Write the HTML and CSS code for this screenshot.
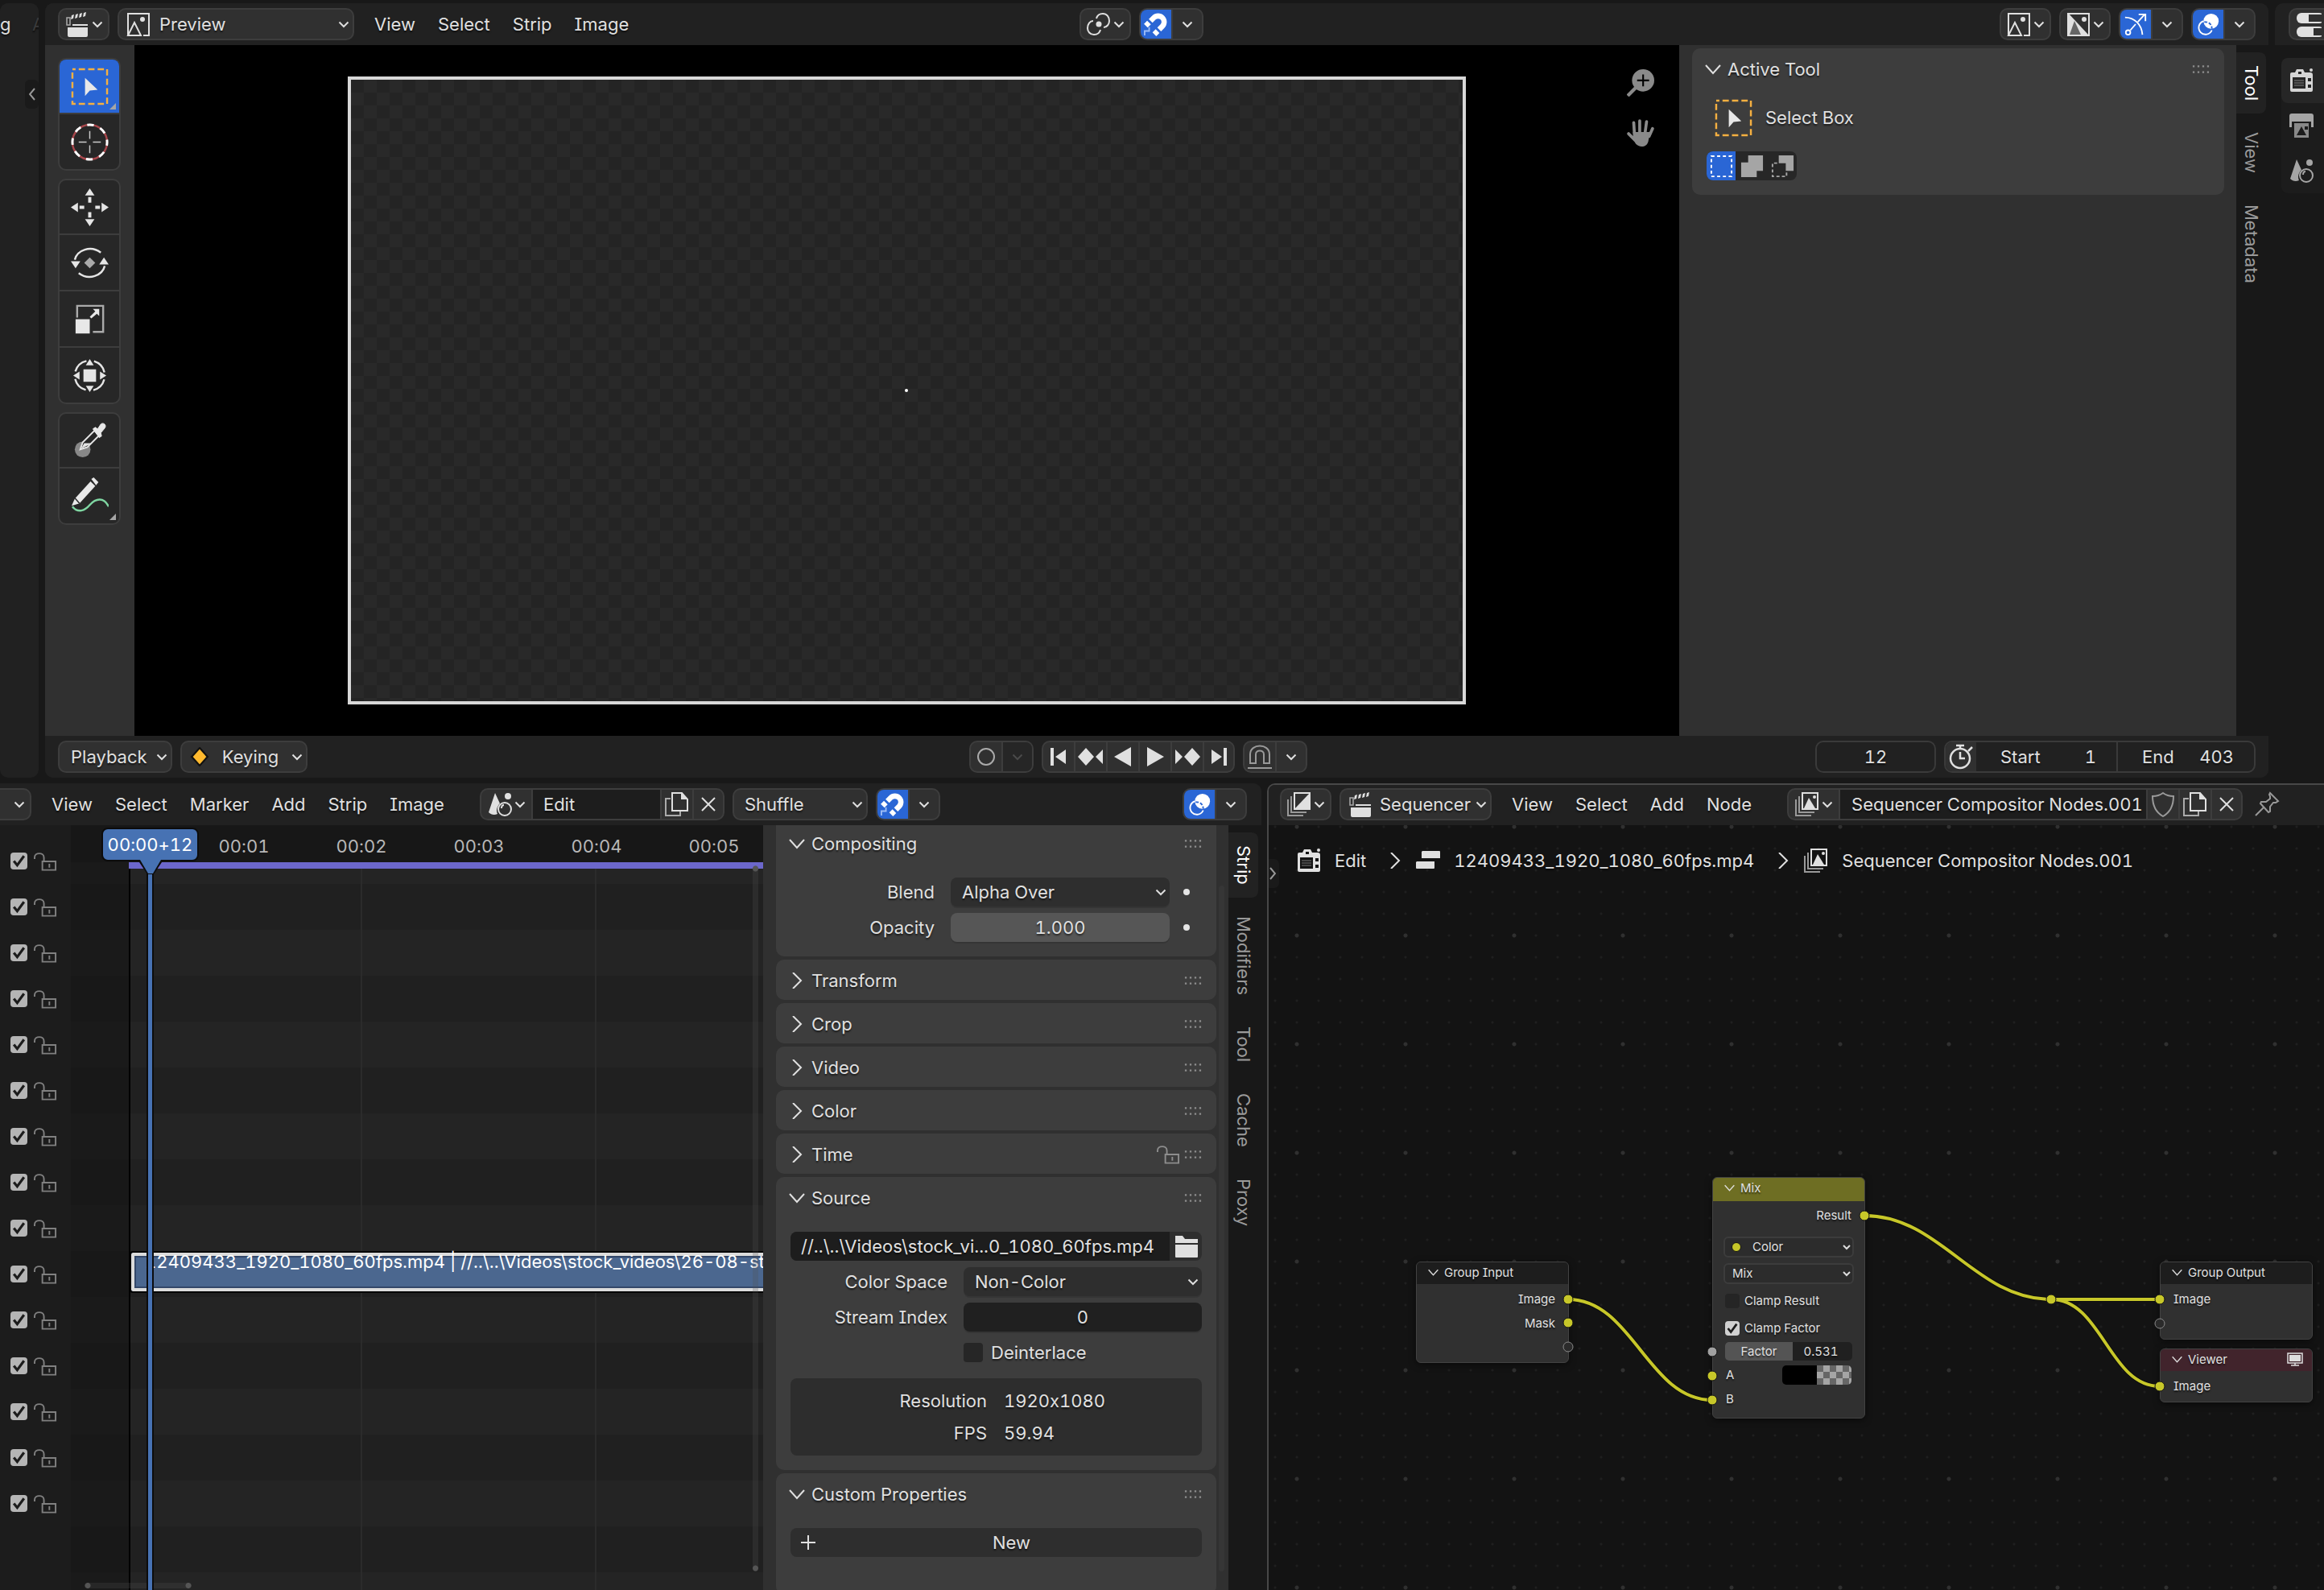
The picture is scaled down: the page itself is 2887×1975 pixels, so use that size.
FILE: index.html
```html
<!DOCTYPE html>
<html lang="en">
<head>
<meta charset="utf-8">
<title>Video Editing</title>
<link rel="stylesheet" href="styles.css">
</head>
<body>
<svg class="defs" aria-hidden="true">
  <symbol id="chev" viewBox="0 0 14 14"><path d="M1.500 4.500 7 10l5.500-5.500" fill="none" stroke="currentColor" stroke-width="2"/></symbol>
  <symbol id="down" viewBox="0 0 20 20"><path d="M1 5l9 10 9-10" fill="none" stroke="currentColor" stroke-width="2"/></symbol>
  <symbol id="right" viewBox="0 0 20 20"><path d="M5 0l10 10L5 20" fill="none" stroke="currentColor" stroke-width="2"/></symbol>
  <symbol id="grip" viewBox="0 0 24 12"><path d="M1 2h22M1 10h22" stroke="currentColor" stroke-width="2.500" stroke-dasharray="2.500 4" fill="none"/></symbol>
  <symbol id="clapper" viewBox="0 0 32 32"><rect x="3" y="8" width="4" height="9" fill="none" stroke="#aaa" stroke-width="1.500"/><path d="M9 5l3-1-1 5-3 1zM14 4l3-1-1 5-3 1zM19 3l3-1-1 5-3 1zM24 2l3-1-1 5-3 1zM10 16h19v2H10zM4 20h25v10a2 2 0 0 1-2 2H6a2 2 0 0 1-2-2z" fill="currentColor"/></symbol>
  <symbol id="image" viewBox="0 0 32 32"><path d="M3 30V3h26v27h-7M3 30l8-16 8 16zM3 30h3" fill="none" stroke="currentColor" stroke-width="2"/><circle cx="21" cy="10" r="3" fill="currentColor"/></symbol>
  <symbol id="imagehalf" viewBox="0 0 32 32"><path d="M3 2l26 28H3z" fill="currentColor"/><path d="M3 3h26v27H3z" fill="none" stroke="currentColor" stroke-width="2"/><path d="M11 12l8 17H5z" fill="#666"/><circle cx="23" cy="10" r="3" fill="currentColor"/></symbol>
  <symbol id="link" viewBox="0 0 32 32"><path d="M13 9c1-4 4-6 8-6 5 0 8 4 8 9 0 4-3 8-7 8M18 23c-1 4-4 6-8 6-5 0-8-4-8-8 0-5 3-9 7-9" fill="none" stroke="currentColor" stroke-width="2"/><circle cx="16" cy="16" r="3.500" fill="currentColor"/></symbol>
  <symbol id="magnet" viewBox="0 0 32 32"><g transform="rotate(45 16 16)" fill="none" stroke="currentColor" stroke-width="7"><path d="M8 18v-6a8 8 0 0 1 16 0v6M8 21v6M24 21v6"/></g><path d="M1 31v-6h6v-5" fill="none" stroke="#9dbcf5" stroke-width="2"/></symbol>
  <symbol id="gizmo" viewBox="0 0 32 32"><path d="M2 7c12 0 22 9 23 23M9 24l7-8M19 13l9-10M20 3h9v9" fill="none" stroke="currentColor" stroke-width="2"/><circle cx="6" cy="27" r="3" fill="none" stroke="currentColor" stroke-width="2"/></symbol>
  <symbol id="overlay" viewBox="0 0 32 32"><circle cx="20" cy="12" r="10" fill="currentColor"/><path d="M10 12a9 9 0 1 0 11 12" fill="none" stroke="currentColor" stroke-width="2"/><path d="M11 13c6 0 10 3 10 9" fill="none" stroke="#2a66d5" stroke-width="2" stroke-dasharray="4 2"/></symbol>
  <symbol id="selbox" viewBox="0 0 48 48"><rect x="2" y="2" width="44" height="44" fill="none" stroke="#f5b041" stroke-width="2.500" stroke-dasharray="8 4" stroke-dashoffset="4"/><path d="M18 13v23l6-7 10-1z" fill="#e8e8e8"/></symbol>
  <symbol id="cursor" viewBox="0 0 48 48"><circle cx="24" cy="24" r="22" fill="none" stroke="#a8474c" stroke-width="2.500"/><circle cx="24" cy="24" r="22" fill="none" stroke="#fff" stroke-width="3" stroke-dasharray="8.640 8.640" stroke-dashoffset="4"/><path d="M24 10v10M24 28v10M10 24h10M28 24h10" stroke="#ccc" stroke-width="1.500"/></symbol>
  <symbol id="move" viewBox="0 0 48 48"><path d="M24 0l6 9H18zM24 48l6-9H18zM0 24l9-6v12zM48 24l-9-6v12zM22 11h4v7h-4zM22 30h4v7h-4zM11 22h6v4h-6zM31 22h6v4h-6z" fill="#e5e5e5"/></symbol>
  <symbol id="rotate" viewBox="0 0 48 48"><path d="M5 20C8 8 25 1 38 11M43 28C40 40 23 47 10 37" fill="none" stroke="#e5e5e5" stroke-width="2.500"/><path d="M0 22h12l-6 9zM36 26h12l-6-9z" fill="#e5e5e5"/><path d="M24 17l7 7-7 7-7-7z" fill="#aaa"/></symbol>
  <symbol id="scale" viewBox="0 0 48 48"><path d="M8 22V7h33v33H28" fill="none" stroke="#aaa" stroke-width="2.500"/><path d="M6 24h18v18H6zM36 11v9l-3-3-7 6-2-2 7-7-3-3z" fill="#e8e8e8"/></symbol>
  <symbol id="xform" viewBox="0 0 48 48"><circle cx="24" cy="24" r="19" fill="none" stroke="#e5e5e5" stroke-width="2.500" stroke-dasharray="20 9.840" stroke-dashoffset="-5"/><path d="M16 16h16v16H16zM24 3l5 8H19zM24 45l5-8H19zM3 24l8-5v10zM45 24l-8-5v10z" fill="#e5e5e5"/></symbol>
  <symbol id="dropper" viewBox="0 0 48 48"><circle cx="15" cy="35" r="10" fill="#888"/><path d="M12 35l3-9 15-15 6 6-15 15z" fill="#262626" stroke="#e5e5e5" stroke-width="2"/><path d="M13 34l4-7h10z" fill="#e5e5e5"/><path d="M28 9l3-2 3 2 4-6c3-3 8 1 5 5l-5 6 1 4-3 2z" fill="#e8e8e8" stroke="#e8e8e8"/></symbol>
  <symbol id="pencil" viewBox="0 0 48 48"><path d="M2 37c7 9 16 5 22-2 8-9 18-10 24 2" fill="none" stroke="#7fd6a2" stroke-width="2.500"/><path d="M1 36l4-9L25 5l6 6L11 33z" fill="#e8e8e8"/><path d="M26 2l3-2 6 6-3 4z" fill="#e8e8e8"/><path d="M5 26l6 7" stroke="#262626" stroke-width="1.500"/></symbol>
  <symbol id="zoomin" viewBox="0 0 32 32"><circle cx="19" cy="13" r="13" fill="currentColor"/><path d="M11 21L1 31" stroke="currentColor" stroke-width="4"/><path d="M19 6v14M12 13h14" stroke="#000" stroke-width="2"/></symbol>
  <symbol id="hand" viewBox="0 0 32 32"><path d="M9 20L8 4M15 18V2M21 18l2-15M26 20l4-9M10 25L2 17" stroke="currentColor" stroke-width="3.500" stroke-linecap="round"/><path d="M7 15h20l-2 11c-2 8-13 8-16 0z" fill="currentColor"/></symbol>
  <symbol id="camera" viewBox="0 0 32 32"><path fill-rule="evenodd" d="M8 6l2-4h8l2 4h7a3 3 0 0 1 3 3v19a2 2 0 0 1-2 2H4a2 2 0 0 1-2-2V8a2 2 0 0 1 2-2zM12 5v3h4V5zM5 12v14h16V12zM24 13v4h4v-4zM24 21v4h4v-4z" fill="currentColor"/><path d="M7 16h12M7 19h12M7 22h12" stroke="currentColor" opacity=".5"/><circle cx="28" cy="3" r="2" fill="currentColor"/></symbol>
  <symbol id="printer" viewBox="0 0 32 32"><path d="M4 1h24a3 3 0 0 1 3 3v14h-3v-7H4v7H1V4a3 3 0 0 1 3-3z" fill="currentColor"/><path fill-rule="evenodd" d="M7 13h18v18H7zM10 28h12l-6-11zM20 17v4h4v-4z" fill="currentColor" opacity=".8"/></symbol>
  <symbol id="scene" viewBox="0 0 32 32"><path d="M10 2l6 13c-4 4-5 9-3 13-4 2-8 1-11-2z" fill="currentColor"/><circle cx="26" cy="6" r="4" fill="currentColor"/><circle cx="22" cy="22" r="8" fill="none" stroke="currentColor" stroke-width="2"/><path d="M18 21c0-2 1-4 3-4" fill="none" stroke="currentColor" stroke-width="2"/></symbol>
  <symbol id="props" viewBox="0 0 32 32"><rect x="1" y="2" width="34" height="13" rx="6" fill="currentColor"/><rect x="16" y="4" width="20" height="9" fill="#303030"/><rect x="1" y="19" width="34" height="13" rx="6" fill="currentColor"/><rect x="22" y="21" width="12" height="9" fill="#303030"/></symbol>
  <symbol id="copy" viewBox="0 0 32 32"><path d="M8 9H2v21h18v-5" fill="none" stroke="#aaa" stroke-width="2"/><path d="M10 2h12l7 8v14H10z" fill="none" stroke="currentColor" stroke-width="2"/><path d="M21 1l9 9h-9z" fill="currentColor"/></symbol>
  <symbol id="cross" viewBox="0 0 32 32"><path d="M8 8l16 16M24 8L8 24" stroke="currentColor" stroke-width="2"/></symbol>
  <symbol id="shield" viewBox="0 0 32 32"><path d="M16 2c4 3 8 4 13 4 0 12-4 20-13 25C7 26 3 18 3 6c5 0 9-1 13-4z" fill="none" stroke="#999" stroke-width="2"/></symbol>
  <symbol id="pin" viewBox="0 0 32 32"><path d="M20 2l10 10-3 2-3 0-4 5 0 6-2 1L8 15l1-2h6l5-4v-3l-1-2zM12 20L2 30" fill="none" stroke="#999" stroke-width="2"/></symbol>
  <symbol id="stack" viewBox="0 0 32 32"><path d="M6 6v20h19M2 10v20h19" fill="none" stroke="#999" stroke-width="2"/><path d="M10 2h19v20H10z" fill="none" stroke="currentColor" stroke-width="2"/><path d="M12 21l6-13 8 13z" fill="currentColor"/><circle cx="25" cy="7" r="2" fill="currentColor"/></symbol>
  <symbol id="compo" viewBox="0 0 32 32"><path d="M6 6v20h19M2 10v20h19" fill="none" stroke="#999" stroke-width="2"/><path d="M10 2h19v20H10z" fill="none" stroke="currentColor" stroke-width="2"/><path d="M29 2v20H10z" fill="currentColor"/></symbol>
  <symbol id="strip" viewBox="0 0 32 32"><path d="M9 4h21a1 1 0 0 1 1 1v8H8V5zM2 17h22v8a1 1 0 0 1-1 1H2a1 1 0 0 1-1-1v-7z" fill="currentColor"/></symbol>
  <symbol id="clock" viewBox="0 0 32 32"><circle cx="15" cy="18" r="12" fill="none" stroke="currentColor" stroke-width="2.500"/><path d="M10 2h10M15 2v5M25 9l5-5M15 10v8h6" fill="none" stroke="currentColor" stroke-width="2.500"/></symbol>
  <symbol id="snapoff" viewBox="0 0 32 32"><path d="M4 24V13C4-1 28-1 28 13v11h-7V13c0-6-10-6-10 0v11zM1 30h30" fill="none" stroke="#999" stroke-width="2"/></symbol>
  <symbol id="lock" viewBox="0 0 30 24"><path d="M1 9V7c0-7 12-7 12 0v5M11 12h17v11H11z" fill="none" stroke="currentColor" stroke-width="2"/><path d="M19 15h2v5h-2z" fill="currentColor"/></symbol>
  <symbol id="folder" viewBox="0 0 32 32"><path d="M2 3h9l3 4h16v5H2zM2 14h28v15a1 1 0 0 1-1 1H3a1 1 0 0 1-1-1z" fill="currentColor"/></symbol>
  <symbol id="plus" viewBox="0 0 20 20"><path d="M10 1v18M1 10h18" stroke="currentColor" stroke-width="2"/></symbol>
  <symbol id="monitor" viewBox="0 0 20 18"><path d="M1 1h18v12H1zM10 13v3M5 16h10" fill="none" stroke="#ddd" stroke-width="1.500"/><path d="M3 3h14v8H3z" fill="#ddd"/></symbol>
  <symbol id="m-first" viewBox="0 0 24 24"><path d="M2 1h4v22H2zM21 3v18L8 12z" fill="currentColor"/></symbol>
  <symbol id="m-prevkey" viewBox="0 0 32 24"><path d="M10 1l10 11-10 11L0 12zM31 3v18l-9-9z" fill="currentColor"/></symbol>
  <symbol id="m-back" viewBox="0 0 24 24"><path d="M22 0v24L1 12z" fill="currentColor"/></symbol>
</svg>

<main class="screen">
  <div class="upper">
    <section class="area sliver">
      <div class="head"><span>g</span><span class="faint">A</span></div>
      <button class="toggle" aria-label="Show sidebar"><svg width="8" height="16" viewBox="0 0 8 16"><path d="M7 1L1 8l6 7" fill="none" stroke="#999" stroke-width="2"/></svg></button>
    </section>

    <section class="area preview">
      <header class="head">
        <button class="btn type" aria-label="Editor type"><svg class="i32"><use href="#clapper"/></svg><svg class="i14"><use href="#chev"/></svg></button>
        <div class="btn mode"><svg class="i32"><use href="#image"/></svg><select aria-label="View type"><option>Preview</option></select></div>
        <nav class="menus"><a href="#">View</a><a href="#">Select</a><a href="#">Strip</a><a href="#">Image</a></nav>
        <span class="gap-a"></span>
        <button class="btn type" aria-label="Pivot point"><svg class="i32"><use href="#link"/></svg><svg class="i14"><use href="#chev"/></svg></button>
        <div class="group"><button class="cell on" aria-label="Snap"><svg class="i32"><use href="#magnet"/></svg></button><button class="cell" aria-label="Snap options"><svg class="i14"><use href="#chev"/></svg></button></div>
        <span class="gap-b"></span>
        <button class="btn type" aria-label="Display mode"><svg class="i32"><use href="#image"/></svg><svg class="i14"><use href="#chev"/></svg></button>
        <button class="btn type" aria-label="Channels"><svg class="i32"><use href="#imagehalf"/></svg><svg class="i14"><use href="#chev"/></svg></button>
        <div class="group"><button class="cell on" aria-label="Gizmos"><svg class="i32"><use href="#gizmo"/></svg></button><button class="cell" aria-label="Gizmo options"><svg class="i14"><use href="#chev"/></svg></button></div>
        <div class="group"><button class="cell on" aria-label="Overlays"><svg class="i32"><use href="#overlay"/></svg></button><button class="cell" aria-label="Overlay options"><svg class="i14"><use href="#chev"/></svg></button></div>
      </header>
      <div class="stage">
        <div class="tools">
          <div class="toolset">
            <button class="tool active more" aria-label="Select Box"><svg><use href="#selbox"/></svg></button>
            <button class="tool" aria-label="Cursor"><svg><use href="#cursor"/></svg></button>
          </div>
          <div class="toolset">
            <button class="tool" aria-label="Move"><svg><use href="#move"/></svg></button>
            <button class="tool" aria-label="Rotate"><svg><use href="#rotate"/></svg></button>
            <button class="tool" aria-label="Scale"><svg><use href="#scale"/></svg></button>
            <button class="tool" aria-label="Transform"><svg><use href="#xform"/></svg></button>
          </div>
          <div class="toolset">
            <button class="tool" aria-label="Sample"><svg><use href="#dropper"/></svg></button>
            <button class="tool more" aria-label="Annotate"><svg><use href="#pencil"/></svg></button>
          </div>
        </div>
        <div class="viewport">
          <div class="frame"><i class="origin"></i></div>
          <div class="nav"><button aria-label="Zoom"><svg><use href="#zoomin"/></svg></button><button aria-label="Pan"><svg><use href="#hand"/></svg></button></div>
        </div>
        <aside class="side">
          <section class="panel">
            <h2><svg class="i20"><use href="#down"/></svg>Active Tool<svg class="grip"><use href="#grip"/></svg></h2>
            <div class="activetool"><svg><use href="#selbox"/></svg>Select Box</div>
            <div class="modes">
              <button class="on" aria-label="Set"><svg viewBox="0 0 32 32"><rect x="3" y="3" width="26" height="26" fill="none" stroke="#fff" stroke-width="2" stroke-dasharray="4 3.400"/></svg></button>
              <button aria-label="Extend"><svg viewBox="0 0 32 32"><path d="M11 2h19v20h-8v8H2V11h9z" fill="#a5a5a5"/></svg></button>
              <button aria-label="Subtract"><svg viewBox="0 0 32 32"><path d="M11 2h19v20H20V12h-9z" fill="#a5a5a5"/><path d="M9 12H3v17h18v-6" fill="none" stroke="#a5a5a5" stroke-width="2" stroke-dasharray="4 3"/></svg></button>
            </div>
          </section>
        </aside>
        <nav class="tabs"><a class="current" href="#">Tool</a><a href="#">View</a><a href="#">Metadata</a></nav>
      </div>
      <footer class="head foot">
        <button class="btn drop">Playback<svg class="i14"><use href="#chev"/></svg></button>
        <button class="btn drop keying"><svg class="key" viewBox="0 0 22 22"><path d="M11 1l9 10-9 10-9-10z" fill="#ffb92e" stroke="#111" stroke-width="2"/></svg>Keying<svg class="i14"><use href="#chev"/></svg></button>
        <span class="gap-c"></span>
        <div class="group"><button class="cell" aria-label="Auto keying"><svg class="i24" viewBox="0 0 24 24"><circle cx="12" cy="12" r="10" fill="none" stroke="#aaa" stroke-width="2"/></svg></button><button class="cell dim" aria-label="Auto keying options"><svg class="i14"><use href="#chev"/></svg></button></div>
        <div class="group">
          <button class="cell" aria-label="Jump to start"><svg class="i24"><use href="#m-first"/></svg></button>
          <button class="cell" aria-label="Previous keyframe"><svg class="i32"><use href="#m-prevkey"/></svg></button>
          <button class="cell" aria-label="Play reverse"><svg class="i24"><use href="#m-back"/></svg></button>
          <button class="cell flip" aria-label="Play"><svg class="i24"><use href="#m-back"/></svg></button>
          <button class="cell flip" aria-label="Next keyframe"><svg class="i32"><use href="#m-prevkey"/></svg></button>
          <button class="cell flip" aria-label="Jump to end"><svg class="i24"><use href="#m-first"/></svg></button>
        </div>
        <div class="group"><button class="cell" aria-label="Playback snap"><svg class="i32"><use href="#snapoff"/></svg></button><button class="cell" aria-label="Playback snap options"><svg class="i14"><use href="#chev"/></svg></button></div>
        <span class="gap-d"></span>
        <input class="frameno" aria-label="Current frame" value="12">
        <div class="group range">
          <button class="cell" aria-label="Use preview range"><svg class="i32"><use href="#clock"/></svg></button>
          <label>Start<input value="1"></label>
          <label>End<input value="403"></label>
        </div>
      </footer>
    </section>

    <section class="area properties">
      <header class="head"><button class="btn" aria-label="Properties editor"><svg class="i32"><use href="#props"/></svg></button></header>
      <nav class="proptabs">
        <a class="current" href="#" aria-label="Render"><svg class="i32"><use href="#camera"/></svg></a>
        <a href="#" aria-label="Output"><svg class="i32"><use href="#printer"/></svg></a>
        <a href="#" aria-label="Scene"><svg class="i32"><use href="#scene"/></svg></a>
      </nav>
    </section>
  </div>

  <div class="lower">
    <section class="area sequencer">
      <header class="head">
        <button class="btn cut" aria-label="View type"><svg class="i14"><use href="#chev"/></svg></button>
        <nav class="menus"><a href="#">View</a><a href="#">Select</a><a href="#">Marker</a><a href="#">Add</a><a href="#">Strip</a><a href="#">Image</a></nav>
        <div class="group data">
          <button class="cell wide" aria-label="Browse scene"><svg class="i32"><use href="#scene"/></svg><svg class="i14"><use href="#chev"/></svg></button>
          <input class="name short" aria-label="Scene name" value="Edit">
          <button class="cell" aria-label="New scene"><svg class="i32"><use href="#copy"/></svg></button>
          <button class="cell" aria-label="Unlink scene"><svg class="i32"><use href="#cross"/></svg></button>
        </div>
        <select class="btn shuffle" aria-label="Overlap mode"><option>Shuffle</option></select>
        <div class="group"><button class="cell on" aria-label="Snap"><svg class="i32"><use href="#magnet"/></svg></button><button class="cell" aria-label="Snap options"><svg class="i14"><use href="#chev"/></svg></button></div>
        <span class="gap-b"></span>
        <div class="group"><button class="cell on" aria-label="Overlays"><svg class="i32"><use href="#overlay"/></svg></button><button class="cell" aria-label="Overlay options"><svg class="i14"><use href="#chev"/></svg></button></div>
      </header>
      <div class="seqbody">
        <ul class="channels">
          <li><input type="checkbox" checked aria-label="Channel 15"><svg><use href="#lock"/></svg></li>
          <li><input type="checkbox" checked aria-label="Channel 14"><svg><use href="#lock"/></svg></li>
          <li><input type="checkbox" checked aria-label="Channel 13"><svg><use href="#lock"/></svg></li>
          <li><input type="checkbox" checked aria-label="Channel 12"><svg><use href="#lock"/></svg></li>
          <li><input type="checkbox" checked aria-label="Channel 11"><svg><use href="#lock"/></svg></li>
          <li><input type="checkbox" checked aria-label="Channel 10"><svg><use href="#lock"/></svg></li>
          <li><input type="checkbox" checked aria-label="Channel 9"><svg><use href="#lock"/></svg></li>
          <li><input type="checkbox" checked aria-label="Channel 8"><svg><use href="#lock"/></svg></li>
          <li><input type="checkbox" checked aria-label="Channel 7"><svg><use href="#lock"/></svg></li>
          <li><input type="checkbox" checked aria-label="Channel 6"><svg><use href="#lock"/></svg></li>
          <li><input type="checkbox" checked aria-label="Channel 5"><svg><use href="#lock"/></svg></li>
          <li><input type="checkbox" checked aria-label="Channel 4"><svg><use href="#lock"/></svg></li>
          <li><input type="checkbox" checked aria-label="Channel 3"><svg><use href="#lock"/></svg></li>
          <li><input type="checkbox" checked aria-label="Channel 2"><svg><use href="#lock"/></svg></li>
          <li><input type="checkbox" checked aria-label="Channel 1"><svg><use href="#lock"/></svg></li>
        </ul>
        <div class="timeline">
          <div class="ruler"><span>00:01</span><span>00:02</span><span>00:03</span><span>00:04</span><span>00:05</span></div>
          <div class="tracks">
            <div class="before"></div>
            <div class="cache"></div>
            <div class="clip"><span>12409433_1920_1080_60fps.mp4 | //..\..\Videos\stock_videos\26-08-stock</span></div>
            <div class="vscroll"></div>
            <div class="hscroll"></div>
          </div>
          <div class="playhead"><b>00:00+12</b><svg width="32" height="18" viewBox="0 0 32 18"><path d="M0 0h32L20 18h-8z" fill="#0c0c0c"/><path d="M3 0h26L19 17h-6z" fill="#4772b3"/></svg><i></i></div>
        </div>
        <aside class="side props">
          <section class="panel first">
            <h2><svg class="i20"><use href="#down"/></svg>Compositing<svg class="grip"><use href="#grip"/></svg></h2>
            <div class="row keyed"><label for="blend">Blend</label><select id="blend" class="field"><option>Alpha Over</option></select><i class="dot"></i></div>
            <div class="row keyed"><label for="opacity">Opacity</label><input id="opacity" class="field full" value="1.000"><i class="dot"></i></div>
          </section>
          <section class="panel"><h2><svg class="i20"><use href="#right"/></svg>Transform<svg class="grip"><use href="#grip"/></svg></h2></section>
          <section class="panel"><h2><svg class="i20"><use href="#right"/></svg>Crop<svg class="grip"><use href="#grip"/></svg></h2></section>
          <section class="panel"><h2><svg class="i20"><use href="#right"/></svg>Video<svg class="grip"><use href="#grip"/></svg></h2></section>
          <section class="panel"><h2><svg class="i20"><use href="#right"/></svg>Color<svg class="grip"><use href="#grip"/></svg></h2></section>
          <section class="panel"><h2><svg class="i20"><use href="#right"/></svg>Time<svg class="lock"><use href="#lock"/></svg><svg class="grip"><use href="#grip"/></svg></h2></section>
          <section class="panel">
            <h2><svg class="i20"><use href="#down"/></svg>Source<svg class="grip"><use href="#grip"/></svg></h2>
            <div class="path"><input aria-label="File path" value="//..\..\Videos\stock_vi...0_1080_60fps.mp4"><button aria-label="Open file"><svg class="i32"><use href="#folder"/></svg></button></div>
            <div class="row"><label for="cs">Color Space</label><select id="cs" class="field"><option>Non-Color</option></select></div>
            <div class="row"><label for="si">Stream Index</label><input id="si" class="field dark" value="0"></div>
            <div class="row"><span></span><label class="check"><input type="checkbox">Deinterlace</label></div>
            <dl class="info"><dt>Resolution</dt><dd>1920x1080</dd><dt>FPS</dt><dd>59.94</dd></dl>
          </section>
          <section class="panel last">
            <h2><svg class="i20"><use href="#down"/></svg>Custom Properties<svg class="grip"><use href="#grip"/></svg></h2>
            <button class="new"><svg class="i20"><use href="#plus"/></svg><span>New</span></button>
          </section>
          <div class="sidescroll"></div>
        </aside>
        <nav class="tabs"><a class="current" href="#">Strip</a><a href="#">Modifiers</a><a href="#">Tool</a><a href="#">Cache</a><a href="#">Proxy</a></nav>
      </div>
    </section>

    <section class="area nodes">
      <header class="head">
        <button class="btn type" aria-label="Editor type"><svg class="i32"><use href="#compo"/></svg><svg class="i14"><use href="#chev"/></svg></button>
        <div class="btn mode seq"><svg class="i32"><use href="#clapper"/></svg><select aria-label="Compositor type"><option>Sequencer</option></select></div>
        <nav class="menus"><a href="#">View</a><a href="#">Select</a><a href="#">Add</a><a href="#">Node</a></nav>
        <div class="group data">
          <button class="cell wide" aria-label="Browse node tree"><svg class="i32"><use href="#stack"/></svg><svg class="i14"><use href="#chev"/></svg></button>
          <input class="name" aria-label="Node tree name" value="Sequencer Compositor Nodes.001">
          <button class="cell" aria-label="Fake user"><svg class="i32"><use href="#shield"/></svg></button>
          <button class="cell" aria-label="New node tree"><svg class="i32"><use href="#copy"/></svg></button>
          <button class="cell" aria-label="Unlink node tree"><svg class="i32"><use href="#cross"/></svg></button>
        </div>
        <button class="pin" aria-label="Pin"><svg class="i32"><use href="#pin"/></svg></button>
      </header>
      <div class="canvas">
        <nav class="crumbs">
          <svg class="i32"><use href="#camera"/></svg><a href="#">Edit</a>
          <svg class="i20"><use href="#right"/></svg>
          <svg class="i32"><use href="#strip"/></svg><a href="#">12409433_1920_1080_60fps.mp4</a>
          <svg class="i20"><use href="#right"/></svg>
          <svg class="i32"><use href="#stack"/></svg><a href="#">Sequencer Compositor Nodes.001</a>
        </nav>
        <button class="toggle" aria-label="Show toolbar"><svg width="8" height="16" viewBox="0 0 8 16"><path d="M1 1l6 7-6 7" fill="none" stroke="#999" stroke-width="2"/></svg></button>

        <article class="node" style="left:183px;top:542px;height:126px">
          <h3><svg><use href="#down"/></svg>Group Input</h3>
          <p class="out">Image</p><p class="out">Mask</p>
        </article>
        <article class="node mix" style="left:551px;top:437px;height:300px">
          <h3><svg><use href="#down"/></svg>Mix</h3>
          <p class="out">Result</p>
          <div class="typed"><i></i><select aria-label="Data type"><option>Color</option></select></div>
          <div class="typed"><select aria-label="Blend type"><option>Mix</option></select></div>
          <label class="ncheck"><input type="checkbox">Clamp Result</label>
          <label class="ncheck"><input type="checkbox" checked>Clamp Factor</label>
          <label class="factor"><span>Factor</span><input value="0.531"></label>
          <p>A<button class="swatch" aria-label="Color A"></button></p><p>B</p>
        </article>
        <article class="node" style="left:1107px;top:542px;height:97px">
          <h3><svg><use href="#down"/></svg>Group Output</h3>
          <p>Image</p>
        </article>
        <article class="node viewer" style="left:1107px;top:650px;height:67px">
          <h3><svg><use href="#down"/></svg>Viewer<svg class="mon"><use href="#monitor"/></svg></h3>
          <p>Image</p>
        </article>
        <svg class="wires" width="1311" height="950" viewBox="0 0 1311 950">
          <g fill="none" stroke="#0d0d0d" stroke-width="6"><path d="M372 589C452 589 471 714 551 714"/><path d="M740 485C835 485 877 589 972 589"/><path d="M972 589H1107"/><path d="M972 589C1035 589 1044 697 1107 697"/></g>
          <g fill="none" stroke="#c7c729" stroke-width="4"><path d="M372 589C452 589 471 714 551 714"/><path d="M740 485C835 485 877 589 972 589"/><path d="M972 589H1107"/><path d="M972 589C1035 589 1044 697 1107 697"/></g>
          <g fill="#c7c729" stroke="#141414" stroke-width="1"><circle cx="372" cy="589" r="6"/><circle cx="372" cy="618" r="6"/><circle cx="551" cy="684" r="6"/><circle cx="551" cy="714" r="6"/><circle cx="740" cy="485" r="6"/><circle cx="972" cy="589" r="6"/><circle cx="1107" cy="589" r="6"/><circle cx="1107" cy="697" r="6"/></g>
          <circle cx="551" cy="654" r="6" fill="#a1a1a1" stroke="#141414"/>
          <g fill="#2b2b2b" stroke="#8a8a8a"><circle cx="372" cy="648" r="6"/><circle cx="1107" cy="619" r="6"/></g>
        </svg>
      </div>
    </section>
  </div>
</main>
</body>
</html>
```
FILE: styles.css
```css
* { box-sizing: border-box; }
body {
  margin: 0;
  background: #181818;
  color: #e0e0e0;
  font: 22px/28px Inter, "Liberation Sans", sans-serif;
  font-feature-settings: "tnum", "cv08", "calt" 0;
  text-shadow: 0 2px 2px rgba(0, 0, 0, .6);
}
.defs { position: absolute; width: 0; height: 0; }
button, input, select { font: inherit; font-feature-settings: inherit; color: inherit; text-shadow: inherit; margin: 0; padding: 0; border: 0; background: none; border-radius: 0; min-width: 0; }
select { appearance: none; }
a { color: inherit; text-decoration: none; }
svg { display: block; flex: none; }
h2, h3, p, dl, dd, ul { margin: 0; padding: 0; font-weight: 400; }

.i32 { width: 32px; height: 32px; }
.i24 { width: 24px; height: 24px; }
.i20 { width: 20px; height: 20px; }
.i14 { width: 14px; height: 14px; }

.screen {
  height: 100vh;
  padding-top: 4px;
  display: grid;
  grid-template-rows: minmax(0, 962fr) minmax(0, 1002fr);
  gap: 7px;
  overflow: hidden;
}
.upper { display: grid; grid-template-columns: 48px minmax(0, 1fr) 61px; gap: 8px; }
.lower { display: grid; grid-template-columns: minmax(0, 1567fr) minmax(0, 1313fr); gap: 7px; }
.area { display: flex; flex-direction: column; overflow: hidden; border-radius: 10px; background: #212121; min-width: 0; position: relative; }

/* editor header bars */
.head { flex: none; height: 52px; padding: 0 16px; display: flex; align-items: center; gap: 10px; background: #212121; white-space: nowrap; }
.btn, .group { height: 40px; border: 2px solid #3d3d3d; border-radius: 10px; background: #303030; display: flex; align-items: center; flex: none; }
.type { width: 64px; justify-content: center; gap: 2px; }
.group { overflow: hidden; }
.cell { width: 38px; height: 36px; display: flex; align-items: center; justify-content: center; gap: 2px; flex: none; }
.cell + .cell, input + .cell { border-left: 2px solid #3d3d3d; width: 40px; }
.group .cell:last-child { width: 38px; }
.cell.on { background: #2a66d5; color: #fff; }
.cell.on .i32 { width: 30px; height: 30px; }
.cell.wide { width: 62px; }
.cell.flip svg { transform: rotate(180deg); }
.cell.dim { color: #4a4a4a; background: #262626; }
.mode { width: 294px; padding-left: 8px; gap: 10px; }
.mode select { flex: 1; height: 36px; }
.mode.seq { width: 189px; gap: 8px; }
.mode select, .shuffle, .field:is(select) {
  background-image: url("data:image/svg+xml,%3Csvg xmlns='http://www.w3.org/2000/svg' width='14' height='14'%3E%3Cpath d='M1.500 4.500 7 10l5.500-5.500' fill='none' stroke='%23ddd' stroke-width='2'/%3E%3C/svg%3E");
  background-repeat: no-repeat;
  background-position: right 4px center;
}
.menus { display: flex; padding-left: 1px; }
.menus a { padding: 0 14px; }
.gap-a { flex: 544; }
.gap-b { flex: 993; }
.gap-c { flex: 823; }
.gap-d { flex: 630; }
.gap-a, .gap-b, .gap-c, .gap-d { margin: 0 -5px; }
.drop { width: 142px; padding: 0 4px 0 14px; justify-content: space-between; }
.keying { width: 158px; padding-left: 10px; }
.key { width: 24px; height: 24px; }
.frameno { width: 150px; height: 40px; border: 2px solid #3a3a3a; border-radius: 10px; text-align: center; }
.range { background: #212121; border-color: #3a3a3a; }
.range .cell { background: #303030; }
.range label { height: 36px; width: 174px; padding: 0 25px 0 30px; display: flex; align-items: center; justify-content: space-between; }
.range label + label { border-left: 2px solid #3a3a3a; width: 171px; }
.range input { width: 60px; text-align: right; }
.data { margin-left: 20px; }
.name { width: 382px; height: 36px; padding-left: 14px; background: #1d1d1d; border-left: 2px solid #3d3d3d; }
.name.short { width: 160px; padding-left: 13px; }
.shuffle { width: 168px; padding-left: 13px; }
.cut { width: 55px; margin-left: -32px; justify-content: flex-end; padding-right: 6px; }
.pin { margin-left: 4px; }

/* top-left sliver */
.sliver .head { padding: 0; justify-content: space-between; }
.faint { color: #3a3a3a; width: 8px; overflow: hidden; }
.toggle { background: #1a1a1a; height: 36px; width: 17px; display: flex; align-items: center; justify-content: center; border-radius: 6px; }
.sliver .toggle { align-self: flex-end; margin-top: 43px; }

/* preview */
.stage { flex: 1; min-height: 0; display: flex; background: #303030; }
.tools { width: 111px; padding: 16px 0 0 16px; display: flex; flex-direction: column; gap: 10px; }
.toolset { width: 78px; border: 2px solid #3d3d3d; border-radius: 10px; background: #272727; overflow: hidden; }
.tool { width: 74px; height: 66px; display: flex; align-items: center; justify-content: center; position: relative; }
.tool + .tool { border-top: 2px solid #3d3d3d; height: 70px; }
.tool svg { width: 47px; height: 47px; }
.tool.active { background: #2a66d5; }
.more::after { content: ""; position: absolute; right: 4px; bottom: 4px; border: 4px solid transparent; border-right-color: #a5a5a5; border-bottom-color: #a5a5a5; }
.viewport { flex: 1; background: #000; display: flex; align-items: center; justify-content: center; position: relative; }
.frame { height: 91%; aspect-ratio: 16 / 9; border: 4px solid #d8d8d8; background: repeating-conic-gradient(#292929 0 25%, #242424 0 50%) 0 0 / 32px 32px; display: flex; align-items: center; justify-content: center; }
.origin { width: 4px; height: 4px; border-radius: 2px; background: #fff; }
.nav { position: absolute; top: 30px; right: 31px; display: flex; flex-direction: column; gap: 28px; color: #8a8a8a; }
.nav svg { width: 34px; height: 34px; }
.side { background: #303030; padding: 4px 15px 0 16px; display: flex; flex-direction: column; gap: 4px; }
.stage .side { width: 692px; }
.panel { background: #3d3d3d; border-radius: 10px; padding: 0 18px; flex: none; }
.panel h2 { font-size: 22px; line-height: 28px; height: 50px; display: flex; align-items: center; gap: 8px; padding-top: 2px; margin-left: -2px; }
.grip { width: 22px; height: 12px; margin-left: auto; color: #8d8d8d; }
.lock { width: 29px; height: 24px; margin-left: auto; color: #8d8d8d; }
.lock + .grip { margin-left: -3px; }
.activetool { height: 60px; margin-top: 6px; padding-left: 10px; display: flex; align-items: center; gap: 16px; }
.activetool svg { width: 47px; height: 47px; }
.modes { display: flex; margin: 12px 0 18px; width: 112px; background: #272727; border-radius: 8px; overflow: hidden; gap: 2px; }
.modes button { width: 36px; height: 36px; display: flex; align-items: center; justify-content: center; }
.modes svg { width: 31px; height: 31px; }
.modes .on { background: #2a66d5; }
.tabs { width: 40px; background: #181818; padding: 9px 3px 0 0; display: flex; flex-direction: column; gap: 7px; color: #9a9a9a; }
.tabs a { writing-mode: vertical-rl; padding: 16px 0; line-height: 37px; border-radius: 0 8px 8px 0; text-shadow: none; }
.tabs .current { background: #222; color: #fff; }

/* properties editor edge */
.properties { background: #181818; border-radius: 10px 0 0 0; }
.properties .head { padding: 0 0 0 17px; }
.properties .btn { padding-left: 7px; width: 64px; }
.proptabs { margin: 16px 0 0 8px; border-radius: 8px 0 0 8px; background: #1c1c1c; color: #a5a5a5; }
.proptabs a { height: 56px; display: flex; align-items: center; padding-left: 9px; border-radius: 8px 0 0 8px; }
.proptabs .current { background: #262626; color: #d5d5d5; }

/* sequencer */
.sequencer { border-radius: 0 10px 0 0; }
.sequencer .head { padding-right: 18px; }
.seqbody { flex: 1; min-height: 0; display: flex; }
.channels { width: 88px; padding-top: 16px; list-style: none; background: #1c1c1c; color: #808080; }
.channels li { height: 57px; padding-left: 13px; display: flex; align-items: center; gap: 8px; }
.channels svg { width: 29px; height: 24px; }
input[type="checkbox"] { appearance: none; flex: none; width: 24px; height: 24px; border-radius: 4px; background: #262626; }
.channels input[type="checkbox"] { width: 21px; height: 21px; }
input[type="checkbox"]:checked { background: #b5b5b5 url("data:image/svg+xml,%3Csvg xmlns='http://www.w3.org/2000/svg' viewBox='0 0 20 20'%3E%3Cpath d='M4 10l4 5 8-11' fill='none' stroke='%231c1c1c' stroke-width='3'/%3E%3C/svg%3E") center / 100%; }
.timeline { flex: 1; min-width: 0; display: flex; flex-direction: column; position: relative; overflow: hidden; background: #171717; }
.ruler { height: 46px; margin-left: 142px; display: flex; align-items: center; padding-top: 5px; color: #b8b8b8; }
.ruler span { width: 146px; flex: none; text-align: center; text-shadow: none; }
.tracks { flex: 1; position: relative; background:
  linear-gradient(#2b2b2b, #2b2b2b) 360px 0 / 2px 100% no-repeat,
  linear-gradient(#2b2b2b, #2b2b2b) 651px 0 / 2px 100% no-repeat,
  repeating-linear-gradient(#242424 0 57px, #202020 57px 114px) 0 -30px / 100% 1140px; }
.before { position: absolute; inset: 0 auto 0 0; width: 74px; background: rgba(20, 20, 20, .6); border-right: 2px solid #000; }
.cache { position: absolute; left: 72px; right: 0; top: 0; height: 8px; background: #6c67cb; }
.clip { position: absolute; left: 73px; right: -20px; top: 483px; height: 52px; border: 2px solid #000; border-radius: 4px; background: #4b678f; box-shadow: inset 0 0 0 4px #dcdcdc, inset 0 0 0 6px #34486a; color: #fff; white-space: nowrap; }
.clip span { position: absolute; left: 17px; top: -3px; text-shadow: none; }
.vscroll { position: absolute; right: 6px; top: 4px; bottom: 23px; width: 7px; border-radius: 4px; background: radial-gradient(circle at 50% 4px, #555 3px, transparent 4px), radial-gradient(circle at 50% calc(100% - 4px), #555 3px, transparent 4px), rgba(80, 80, 80, .25); }
.hscroll { position: absolute; left: 17px; bottom: 2px; width: 133px; height: 7px; border-radius: 4px; background: radial-gradient(circle at 4px 50%, #555 3px, transparent 4px), radial-gradient(circle at calc(100% - 4px) 50%, #555 3px, transparent 4px), rgba(80, 80, 80, .25); }
.playhead { position: absolute; left: 38px; top: 3px; bottom: 0; width: 121px; display: flex; flex-direction: column; align-items: center; }
.playhead b { width: 121px; height: 42px; border: 2px solid #0c0c0c; border-radius: 8px; background: #4772b3; color: #fff; font-weight: 400; line-height: 38px; text-align: center; text-shadow: none; }
.playhead svg { margin-top: -2px; z-index: 1; }
.playhead i { flex: 1; width: 9px; margin-top: -6px; background: #4772b3; border: solid #0c0c0c; border-width: 0 2px; }

.props { width: 578px; padding-top: 0; position: relative; overflow: hidden; }
.sequencer .tabs { width: 41px; padding-right: 4px; }
.props .first { border-radius: 0 0 10px 10px; padding-bottom: 18px; }
.props .first h2 { height: 46px; margin-bottom: 19px; padding-top: 0; }
.row { display: grid; grid-template-columns: 195px minmax(0, 1fr); column-gap: 20px; height: 36px; margin-top: 8px; align-items: center; }
.row > label:first-child { text-align: right; }
.row.keyed { grid-template-columns: 179px minmax(0, 1fr) 8px; margin-right: 12px; }
.row.keyed .dot { margin-left: -3px; }
.field { height: 36px; width: 100%; border-radius: 8px; background-color: #2e2e2e; padding: 0 14px; box-shadow: 0 2px 0 rgba(0, 0, 0, .12); }
input.field { text-align: center; }
.field.full { background: #565656; }
.field.dark { background: #202020; }
.dot { width: 8px; height: 8px; border-radius: 4px; background: #e5e5e5; }
.path { display: flex; height: 36px; margin-top: 18px; border-radius: 8px; overflow: hidden; background: #2e2e2e; gap: 1px; }
.path input { flex: 1; background: #1d1d1d; padding-left: 13px; }
.path button { width: 39px; display: flex; align-items: center; justify-content: center; }
.check { display: flex; align-items: center; gap: 10px; }
.info { margin: 14px 0 18px; height: 96px; padding: 8px 0; border-radius: 8px; background: #2d2d2d; display: grid; grid-template-columns: 244px 1fr; column-gap: 21px; align-items: center; }
.info dt { text-align: right; }
.last { height: 150px; }
.new { width: 100%; height: 36px; margin-top: 18px; border-radius: 8px; background: #2e2e2e; padding-left: 12px; display: flex; align-items: center; }
.new span { flex: 1; padding-left: 6px; }
.sidescroll { position: absolute; right: 5px; top: 75px; bottom: 23px; width: 7px; border-radius: 4px; background: #363636; }

/* node editor */
.nodes { border: solid #484848; border-width: 2px 0 0 2px; border-radius: 10px 0 0 0; }
.nodes > .head { height: 50px; padding: 0 16px 2px 14px; }
.canvas { flex: 1; position: relative; overflow: hidden; background:
  radial-gradient(circle at 3px 3px, #303030 2px, transparent 3px) 32px -1px / 135px 135px,
  radial-gradient(circle at 3px 3px, #1f1f1f 1px, transparent 2px) 5px -1px / 27px 27px #131313; }
.crumbs { display: flex; align-items: center; height: 32px; margin: 28px 0 0 34px; white-space: nowrap; }
.crumbs a { margin-left: 16px; }
.crumbs .i20 { margin: 0 15px 0 26px; }
.canvas .toggle { position: absolute; left: -4px; top: 42px; }
.wires { position: absolute; left: 0; top: 0; pointer-events: none; }
.node { position: absolute; width: 190px; border: 1px solid #424242; border-radius: 6px; background: #303030; font-size: 15px; line-height: 20px; box-shadow: 0 2px 8px rgba(0, 0, 0, .5); }
.node h3 { height: 27px; padding: 0 0 2px 14px; display: flex; align-items: center; gap: 7px; font-size: 15px; background: #1d1d1d; border-radius: 5px 5px 0 0; margin-bottom: 4px; }
.node h3 svg { width: 13px; height: 13px; }
.node h3 .mon { width: 20px; height: 18px; margin: 0 11px 0 auto; }
.node p { height: 30px; padding: 0 16px; display: flex; align-items: center; justify-content: space-between; }
.node .out { justify-content: flex-end; }
.node.mix h3 { background: #6e6e23; height: 29px; margin-bottom: 3px; padding-bottom: 4px; }
.viewer h3 { background: #41242c; }
.typed { margin: 0 13px 7px; height: 26px; border: 2px solid #3c3c3c; border-radius: 6px; background: #2c2c2c; display: flex; align-items: center; }
.typed i { width: 12px; height: 12px; border-radius: 6px; background: #c7c729; border: 1px solid #141414; margin-left: 8px; }
.typed select { flex: 1; padding-left: 9px; height: 22px; background: url("data:image/svg+xml,%3Csvg xmlns='http://www.w3.org/2000/svg' width='10' height='10'%3E%3Cpath d='M1 3l4 4 4-4' fill='none' stroke='%23ddd' stroke-width='2'/%3E%3C/svg%3E") no-repeat right 2px center; }
.typed i + select { padding-left: 14px; }
.mix .out { margin-bottom: 11px; }
.ncheck { height: 34px; padding-left: 15px; display: flex; align-items: center; gap: 6px; }
.typed + .ncheck { margin-top: -10px; }
.typed + .typed { margin-bottom: 14px; }
.node input[type="checkbox"] { width: 18px; height: 18px; border-radius: 4px; background-color: #252525; }
.node input[type="checkbox"]:checked { background-color: #d0d0d0; }
.factor { margin: 0 15px 3px; height: 23px; border-radius: 5px; display: flex; overflow: hidden; background: linear-gradient(90deg, #545454 53%, #202020 0); align-items: center; }
.factor span { width: 84px; text-align: center; }
.factor input { width: 70px; text-align: center; }
.swatch { width: 86px; height: 24px; border-radius: 5px; background: linear-gradient(#000, #000) 0 0 / 50% 100% no-repeat, repeating-conic-gradient(#a5a5a5 0 25%, #666 0 50%) 43px 0 / 16px 16px; }
```
